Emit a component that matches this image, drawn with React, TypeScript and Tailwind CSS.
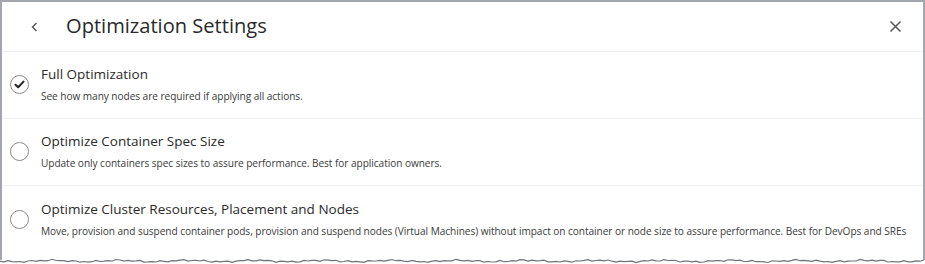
import React from "react";

const options = [
    {
        title: "Full Optimization",
        desc: "See how many nodes are required if applying all actions.",
        checked: true,
    },
    {
        title: "Optimize Container Spec Size",
        desc: "Update only containers spec sizes to assure performance. Best for application owners.",
        checked: false,
    },
    {
        title: "Optimize Cluster Resources, Placement and Nodes",
        desc: "Move, provision and suspend container pods, provision and suspend nodes (Virtual Machines) without impact on container or node size to assure performance. Best for DevOps and SREs",
        checked: false,
    },
];

// jagged "torn" edge along the bottom of the screenshot
const tornPoints = Array.from({ length: 232 }, (_, i) => {
    const x = i * 4;
    const n = Math.sin(i * 2.3) * 0.6 + Math.sin(i * 0.37) * 0.7 + Math.cos(i * 5.1) * 0.4;
    return `${x},${(3 + n).toFixed(1)}`;
}).join(" ");

function Radio({ checked }: { checked: boolean }) {
    return (
        <div className="w-[19px] h-[19px] rounded-full border-[1.5px] border-[#8a8a8a] flex items-center justify-center bg-white">
            {checked && (
                <svg width="11" height="9" viewBox="0 0 11 9">
                    <path d="M1.5 4.8 L4.2 7.3 L9.5 1.6" fill="none" stroke="#222" strokeWidth="2" strokeLinecap="round" strokeLinejoin="round" />
                </svg>
            )}
        </div>
    );
}

export default function App() {
    return (
        <div className="w-[925px] h-[264px] bg-white relative overflow-hidden" style={{ fontFamily: '"Open Sans", "Noto Sans", sans-serif' }}>
            <div className="h-[260px] border-l-2 border-t-2 border-r-2 border-[#a3a7ab] flex flex-col">
                <div className="h-[50px] flex items-center border-b border-[#f0f0f0] shrink-0">
                    <svg className="ml-[28px]" width="10" height="12" viewBox="0 0 10 12">
                        <path d="M6.5 2 L2.5 6 L6.5 10" fill="none" stroke="#555" strokeWidth="1.4" />
                    </svg>
                    <h1 className="ml-[26px] text-[20.1px] text-[#2a2a2a] leading-none">Optimization Settings</h1>
                    <svg className="ml-auto mr-[21px]" width="13" height="13" viewBox="0 0 13 13">
                        <path d="M1.5 1.5 L11.5 11.5 M11.5 1.5 L1.5 11.5" fill="none" stroke="#555" strokeWidth="1.5" />
                    </svg>
                </div>
                {options.map((o, i) => (
                    <div key={i} className={`h-[67px] flex items-center shrink-0 ${i < 2 ? "border-b border-[#f2f2f2]" : ""}`}>
                        <div className="w-[39px] pl-[8px] shrink-0 -mt-[1px]">
                            <Radio checked={o.checked} />
                        </div>
                        <div className="flex flex-col -mt-[2px]">
                            <div className="text-[13.5px] text-[#2a2a2a] leading-[18px]">{o.title}</div>
                            <div className="text-[10.1px] text-[#3a3a3a] leading-[14px] mt-[6px] whitespace-nowrap tracking-[-0.05px]">{o.desc}</div>
                        </div>
                    </div>
                ))}
            </div>
            <svg className="absolute left-0 bottom-0" width="925" height="6" viewBox="0 0 925 6">
                <polyline points={tornPoints} fill="none" stroke="#70747a" strokeWidth="1.2" />
            </svg>
        </div>
    );
}
